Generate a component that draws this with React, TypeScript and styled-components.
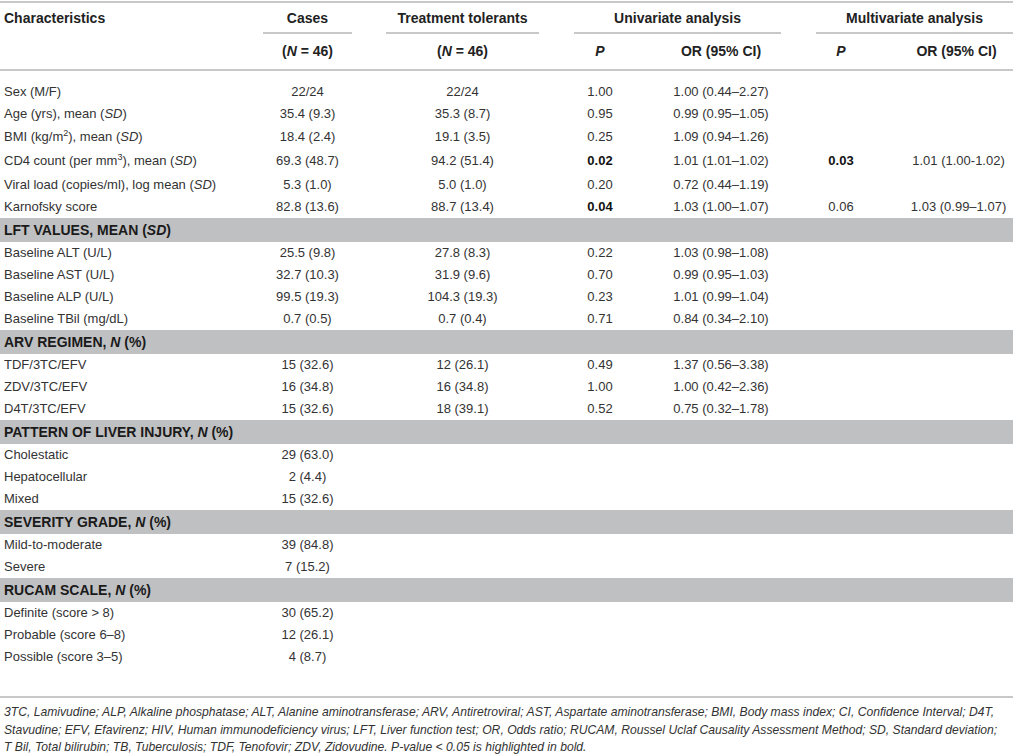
import React from 'react'
import styled, { createGlobalStyle } from 'styled-components'

const GlobalStyle = createGlobalStyle`
  html, body {
    margin: 0;
    padding: 0;
    background: #ffffff;
  }
  body {
    font-family: 'Liberation Sans', Arial, Helvetica, sans-serif;
    color: #333333;
  }
  sup {
    font-size: 9px;
    line-height: 0;
    vertical-align: baseline;
    position: relative;
    top: -5px;
  }
`

const Page = styled.div`
  width: 1013px;
  padding-top: 1px;
`

const Table = styled.table`
  width: 1013px;
  border-collapse: collapse;
  table-layout: fixed;
  border-top: 2px solid #c8c8c8;
  border-bottom: 2px solid #c8c8c8;
  font-size: 13px;
`

const HeadRow = styled.tr<{ $rule?: boolean }>`
  border-bottom: ${(p) => (p.$rule ? '2px solid #c8c8c8' : 'none')};
`

const HeadCell = styled.th<{ $align?: string; $pad?: number }>`
  padding: 0 0 0 ${(p) => p.$pad ?? 0}px;
  font-size: 14px;
  font-weight: 700;
  color: #222222;
  text-align: ${(p) => p.$align ?? 'center'};
  vertical-align: bottom;
`

const GroupLabel = styled.div<{ $ml: number; $mr: number; $rule?: boolean }>`
  margin: 0 ${(p) => p.$mr}px 0 ${(p) => p.$ml}px;
  padding: 6px 0 5px;
  line-height: 18px;
  border-bottom: 2px solid ${(p) => (p.$rule ? '#c8c8c8' : 'transparent')};
`

const SubLabel = styled.div`
  padding: 8px 0 9px;
  line-height: 18px;
`

const Row = styled.tr``

const Cell = styled.td<{ $align?: string; $pad?: number; $top?: number; $bottom?: number; $bold?: boolean }>`
  padding: ${(p) => p.$top ?? 0}px 0 ${(p) => p.$bottom ?? 0}px ${(p) => p.$pad ?? 0}px;
  line-height: 22px;
  text-align: ${(p) => p.$align ?? 'center'};
  font-weight: ${(p) => (p.$bold ? 700 : 400)};
  color: ${(p) => (p.$bold ? '#111111' : '#333333')};
  white-space: nowrap;
`

const SectionCell = styled.td`
  padding: 0 0 0 4px;
  line-height: 24px;
  background: #bfc0c2;
  font-size: 14px;
  font-weight: 700;
  color: #1a1a1a;
  text-align: left;
  white-space: nowrap;
`

const Notes = styled.div`
  padding: 6px 0 0 4px;
  font-size: 12.15px;
  line-height: 17.5px;
  font-style: italic;
  color: #333333;
`

const NoteLine = styled.div`
  white-space: nowrap;
`

type DataRow = {
  kind: 'data'
  label: React.ReactNode
  cases: string
  tol: string
  p1?: string
  p1Bold?: boolean
  or1?: string
  p2?: string
  p2Bold?: boolean
  or2?: string
  top?: number
  bottom?: number
}

type SectionRow = { kind: 'section'; label: React.ReactNode }

const rows: (DataRow | SectionRow)[] = [
  { kind: 'data', label: 'Sex (M/F)', cases: '22/24', tol: '22/24', p1: '1.00', or1: '1.00 (0.44–2.27)', top: 10 },
  { kind: 'data', label: <>Age (yrs), mean (<i>SD</i>)</>, cases: '35.4 (9.3)', tol: '35.3 (8.7)', p1: '0.95', or1: '0.99 (0.95–1.05)' },
  { kind: 'data', label: <>BMI (kg/m<sup>2</sup>), mean (<i>SD</i>)</>, cases: '18.4 (2.4)', tol: '19.1 (3.5)', p1: '0.25', or1: '1.09 (0.94–1.26)', top: 1 },
  { kind: 'data', label: <>CD4 count (per mm<sup>3</sup>), mean (<i>SD</i>)</>, cases: '69.3 (48.7)', tol: '94.2 (51.4)', p1: '0.02', p1Bold: true, or1: '1.01 (1.01–1.02)', p2: '0.03', p2Bold: true, or2: '1.01 (1.00-1.02)', top: 1.5, bottom: 2.5 },
  { kind: 'data', label: <>Viral load (copies/ml), log mean (<i>SD</i>)</>, cases: '5.3 (1.0)', tol: '5.0 (1.0)', p1: '0.20', or1: '0.72 (0.44–1.19)' },
  { kind: 'data', label: 'Karnofsky score', cases: '82.8 (13.6)', tol: '88.7 (13.4)', p1: '0.04', p1Bold: true, or1: '1.03 (1.00–1.07)', p2: '0.06', or2: '1.03 (0.99–1.07)' },
  { kind: 'section', label: <>LFT VALUES, MEAN (<i>SD</i>)</> },
  { kind: 'data', label: 'Baseline ALT (U/L)', cases: '25.5 (9.8)', tol: '27.8 (8.3)', p1: '0.22', or1: '1.03 (0.98–1.08)' },
  { kind: 'data', label: 'Baseline AST (U/L)', cases: '32.7 (10.3)', tol: '31.9 (9.6)', p1: '0.70', or1: '0.99 (0.95–1.03)' },
  { kind: 'data', label: 'Baseline ALP (U/L)', cases: '99.5 (19.3)', tol: '104.3 (19.3)', p1: '0.23', or1: '1.01 (0.99–1.04)' },
  { kind: 'data', label: 'Baseline TBil (mg/dL)', cases: '0.7 (0.5)', tol: '0.7 (0.4)', p1: '0.71', or1: '0.84 (0.34–2.10)' },
  { kind: 'section', label: <>ARV REGIMEN, <i>N</i> (%)</> },
  { kind: 'data', label: 'TDF/3TC/EFV', cases: '15 (32.6)', tol: '12 (26.1)', p1: '0.49', or1: '1.37 (0.56–3.38)' },
  { kind: 'data', label: 'ZDV/3TC/EFV', cases: '16 (34.8)', tol: '16 (34.8)', p1: '1.00', or1: '1.00 (0.42–2.36)' },
  { kind: 'data', label: 'D4T/3TC/EFV', cases: '15 (32.6)', tol: '18 (39.1)', p1: '0.52', or1: '0.75 (0.32–1.78)' },
  { kind: 'section', label: <>PATTERN OF LIVER INJURY, <i>N</i> (%)</> },
  { kind: 'data', label: 'Cholestatic', cases: '29 (63.0)', tol: '' },
  { kind: 'data', label: 'Hepatocellular', cases: '2 (4.4)', tol: '' },
  { kind: 'data', label: 'Mixed', cases: '15 (32.6)', tol: '' },
  { kind: 'section', label: <>SEVERITY GRADE, <i>N</i> (%)</> },
  { kind: 'data', label: 'Mild-to-moderate', cases: '39 (84.8)', tol: '' },
  { kind: 'data', label: 'Severe', cases: '7 (15.2)', tol: '' },
  { kind: 'section', label: <>RUCAM SCALE, <i>N</i> (%)</> },
  { kind: 'data', label: 'Definite (score > 8)', cases: '30 (65.2)', tol: '' },
  { kind: 'data', label: 'Probable (score 6–8)', cases: '12 (26.1)', tol: '' },
  { kind: 'data', label: 'Possible (score 3–5)', cases: '4 (8.7)', tol: '', bottom: 28 },
]

const widths = [246, 123, 187, 88, 154, 86, 129]

export default function App() {
  return (
    <Page>
      <GlobalStyle />
      <Table>
        <colgroup>
          {widths.map((w, i) => (
            <col key={i} style={{ width: w }} />
          ))}
        </colgroup>
        <thead>
          <HeadRow>
            <HeadCell $align="left" $pad={4}>
              <GroupLabel $ml={0} $mr={0}>Characteristics</GroupLabel>
            </HeadCell>
            <HeadCell>
              <GroupLabel $ml={17} $mr={17} $rule>Cases</GroupLabel>
            </HeadCell>
            <HeadCell>
              <GroupLabel $ml={17} $mr={17} $rule>Treatment tolerants</GroupLabel>
            </HeadCell>
            <HeadCell colSpan={2}>
              <GroupLabel $ml={18} $mr={17} $rule>Univariate analysis</GroupLabel>
            </HeadCell>
            <HeadCell colSpan={2}>
              <GroupLabel $ml={18} $mr={0} $rule>Multivariate analysis</GroupLabel>
            </HeadCell>
          </HeadRow>
          <HeadRow $rule>
            <HeadCell />
            <HeadCell>
              <SubLabel>(<i>N</i> = 46)</SubLabel>
            </HeadCell>
            <HeadCell>
              <SubLabel>(<i>N</i> = 46)</SubLabel>
            </HeadCell>
            <HeadCell>
              <SubLabel><i>P</i></SubLabel>
            </HeadCell>
            <HeadCell>
              <SubLabel>OR (95% CI)</SubLabel>
            </HeadCell>
            <HeadCell>
              <SubLabel><i>P</i></SubLabel>
            </HeadCell>
            <HeadCell $pad={16}>
              <SubLabel>OR (95% CI)</SubLabel>
            </HeadCell>
          </HeadRow>
        </thead>
        <tbody>
          {rows.map((r, i) => {
            if (r.kind === 'section') {
              return (
                <Row key={i}>
                  <SectionCell colSpan={7}>{r.label}</SectionCell>
                </Row>
              )
            }
            const top = r.top ?? 0
            const bottom = r.bottom ?? 0
            return (
              <Row key={i}>
                <Cell $align="left" $pad={4} $top={top} $bottom={bottom}>{r.label}</Cell>
                <Cell $top={top} $bottom={bottom}>{r.cases}</Cell>
                <Cell $top={top} $bottom={bottom}>{r.tol}</Cell>
                <Cell $top={top} $bottom={bottom} $bold={r.p1Bold}>{r.p1}</Cell>
                <Cell $top={top} $bottom={bottom}>{r.or1}</Cell>
                <Cell $top={top} $bottom={bottom} $bold={r.p2Bold}>{r.p2}</Cell>
                <Cell $top={top} $bottom={bottom} $pad={20}>{r.or2}</Cell>
              </Row>
            )
          })}
        </tbody>
      </Table>
      <Notes>
        <NoteLine>
          3TC, Lamivudine; ALP, Alkaline phosphatase; ALT, Alanine aminotransferase; ARV, Antiretroviral; AST, Aspartate aminotransferase; BMI, Body mass index; CI, Confidence Interval; D4T,
        </NoteLine>
        <NoteLine>
          Stavudine; EFV, Efavirenz; HIV, Human immunodeficiency virus; LFT, Liver function test; OR, Odds ratio; RUCAM, Roussel Uclaf Causality Assessment Method; SD, Standard deviation;
        </NoteLine>
        <NoteLine>
          T Bil, Total bilirubin; TB, Tuberculosis; TDF, Tenofovir; ZDV, Zidovudine. P-value &lt; 0.05 is highlighted in bold.
        </NoteLine>
      </Notes>
    </Page>
  )
}
